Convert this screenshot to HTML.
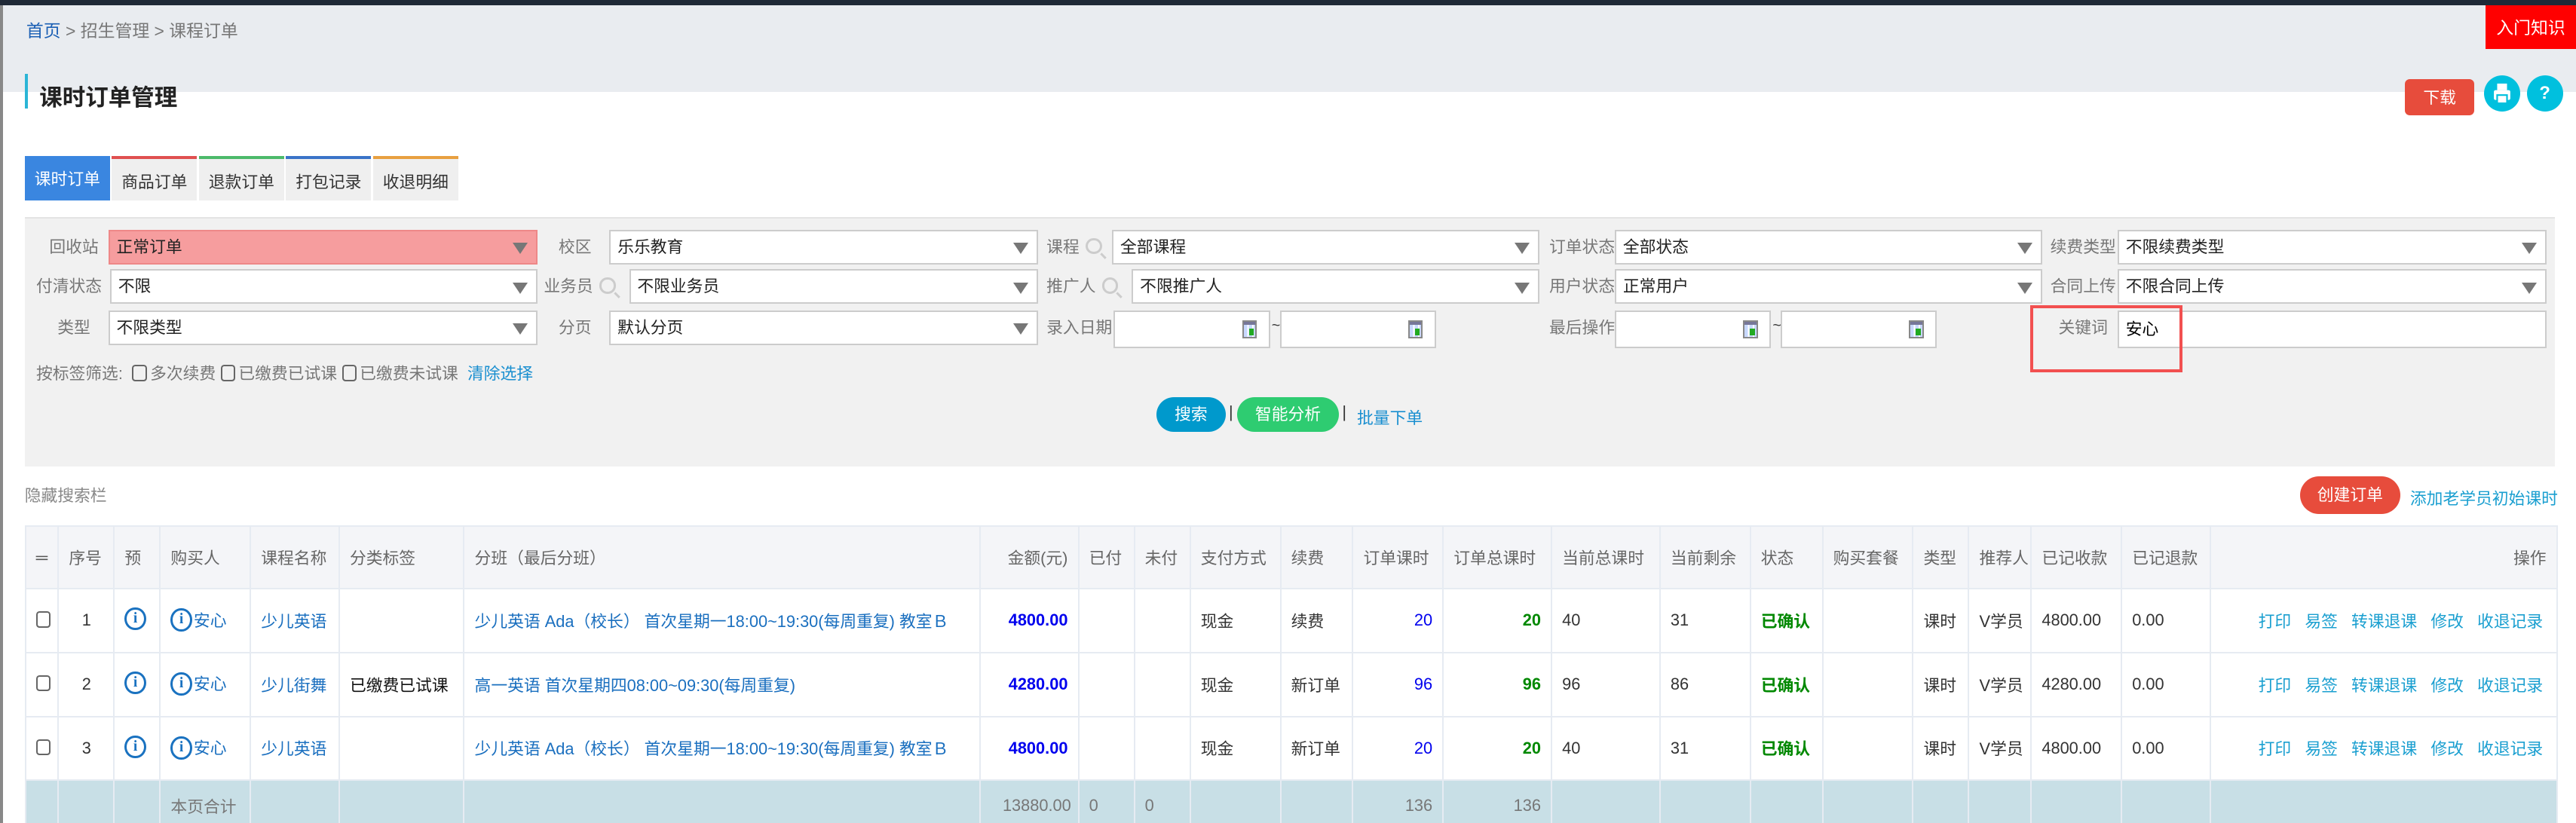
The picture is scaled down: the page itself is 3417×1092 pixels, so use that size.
<!DOCTYPE html>
<html><head><meta charset="utf-8">
<style>
html,body{margin:0;padding:0;width:3417px;height:1092px;overflow:hidden;background:#fff}
#w{zoom:2.1792;position:relative;width:1568px;height:502px;overflow:hidden;font-family:"Liberation Sans","Noto Sans CJK SC",sans-serif;font-size:10.5px;color:#333}
.a{position:absolute}
.top{left:0;top:0;width:1568px;height:3px;background:#1f2937}
.bc{left:2px;top:3px;width:1566px;height:53px;background:#e9ecf0}
.lb{left:0;top:3px;width:2px;height:499px;background:#888}
.sel{position:absolute;height:21px;background:#fff;border:1px solid #ccc;box-sizing:border-box;line-height:19px;padding-left:4px;font-size:10px;color:#222}
.sel:after{content:"";position:absolute;right:5px;top:7px;border-left:5px solid transparent;border-right:5px solid transparent;border-top:7px solid #777}
.inp{position:absolute;height:23px;background:#fff;border:1px solid #ccc;box-sizing:border-box}
.cal{position:absolute;right:7px;top:5px;width:9px;height:11px;background:repeating-linear-gradient(90deg,#c8d8ff 0 2px,#fff 2px 3px);border:1px solid #888;box-sizing:border-box}
.cal:after{content:"";position:absolute;right:1px;bottom:1px;width:3px;height:4px;background:#2a2}
.cal:before{content:"";position:absolute;left:0;top:0;right:0;height:2px;background:#779}
.lbl{position:absolute;color:#777;font-size:10px;line-height:21px}
.mg{display:inline-block;width:7px;height:7px;border:1.5px solid #ccc;border-radius:50%;position:relative;margin-left:4px;vertical-align:-1px}
.mg:after{content:"";position:absolute;right:-4px;bottom:-3px;width:4px;height:1.5px;background:#ccc;transform:rotate(45deg)}
.tab{position:absolute;top:95px;width:52px;height:27px;background:#efefef;text-align:center;line-height:28px;font-size:10px;color:#333;box-sizing:border-box}
table{position:absolute;left:15px;top:320px;border-collapse:collapse;table-layout:fixed;width:1541px}
td{border:1px solid #e6ebf2;padding:0 0 0 6px;white-space:nowrap;overflow:hidden;font-size:10px;height:38px;color:#333;vertical-align:middle}
thead td{background:#f4f5f8;color:#666;height:37px}
tr.tot td{background:#c8dfe6;color:#777;height:30px}
.bl{color:#1a6fbf}.amt{color:#0000ee;font-weight:bold;text-align:right;padding-right:6px}
.gr{color:#008800;font-weight:bold}.op{color:#1a9fd0}
.ic{display:inline-block;width:13px;height:14px;border:1.5px solid #1a72c0;border-radius:50%;box-sizing:border-box;text-align:center;font:bold 9px/11px "Liberation Serif",serif;color:#1a72c0;vertical-align:middle;margin-right:1px;position:relative;top:-1px}
.cb{display:inline-block;width:7px;height:8px;border:1px solid #666;border-radius:2px;vertical-align:-1px;margin:0 2px 0 3px}
</style></head><body><div id="w">
<div class="a top"></div><div class="a bc"></div><div class="a lb"></div>
<div class="a" style="left:16px;top:10px;font-size:10.5px;color:#777"><span style="color:#1a5fb4">首页</span> &gt; 招生管理 &gt; 课程订单</div>
<div class="a" style="left:1513px;top:3px;width:55px;height:27px;background:#f00;color:#fff;font-size:10.5px;text-align:center;line-height:28px">入门知识</div>
<div class="a" style="left:15px;top:45px;width:2px;height:21px;background:#2bb5d6"></div>
<div class="a" style="left:24px;top:48px;font-size:14px;font-weight:bold;color:#222">课时订单管理</div>
<div class="a" style="left:1464px;top:48px;width:42px;height:22px;background:#e74c3c;border-radius:3px;color:#fff;text-align:center;line-height:23px;font-size:10px">下载</div>
<div class="a" style="left:1512px;top:46px;width:22px;height:22px;border-radius:50%;background:#00c0de"><svg width="22" height="22" viewBox="0 0 22 22"><rect x="8" y="5" width="6" height="4" fill="#fff"/><rect x="6" y="9" width="10" height="6" rx="1" fill="#fff"/><rect x="8" y="12" width="6" height="5" fill="#fff" stroke="#00c0de" stroke-width="1"/></svg></div>
<div class="a" style="left:1538px;top:46px;width:22px;height:22px;border-radius:50%;background:#00c0de;color:#fff;text-align:center;line-height:22px;font-weight:bold;font-size:11px">?</div>

<div class="tab" style="left:15px;background:#3a86e0;color:#fff">课时订单</div>
<div class="tab" style="left:68px;border-top:2px solid #e05050">商品订单</div>
<div class="tab" style="left:121px;border-top:2px solid #4cba6a">退款订单</div>
<div class="tab" style="left:174px;border-top:2px solid #3a73c8">打包记录</div>
<div class="tab" style="left:227px;border-top:2px solid #e8a040">收退明细</div>

<div class="a" style="left:15px;top:132px;width:1540px;height:151px;background:#f1f1f1;border-top:1px solid #e4e4e4"></div>
<div class="lbl" style="left:30px;top:140px">回收站</div>
<div class="sel" style="left:66px;top:140px;width:261px;background:#f69d9e;border-color:#e88">正常订单</div>
<div class="lbl" style="left:340px;top:140px">校区</div>
<div class="sel" style="left:371px;top:140px;width:261px">乐乐教育</div>
<div class="lbl" style="left:637px;top:140px">课程<span class="mg"></span></div>
<div class="sel" style="left:677px;top:140px;width:260px">全部课程</div>
<div class="lbl" style="left:943px;top:140px">订单状态</div>
<div class="sel" style="left:983px;top:140px;width:260px">全部状态</div>
<div class="lbl" style="left:1248px;top:140px">续费类型</div>
<div class="sel" style="left:1289px;top:140px;width:261px">不限续费类型</div>
<div class="lbl" style="left:22px;top:164px">付清状态</div>
<div class="sel" style="left:67px;top:164px;width:260px">不限</div>
<div class="lbl" style="left:331px;top:164px">业务员<span class="mg"></span></div>
<div class="sel" style="left:383px;top:164px;width:249px">不限业务员</div>
<div class="lbl" style="left:637px;top:164px">推广人<span class="mg"></span></div>
<div class="sel" style="left:689px;top:164px;width:248px">不限推广人</div>
<div class="lbl" style="left:943px;top:164px">用户状态</div>
<div class="sel" style="left:983px;top:164px;width:260px">正常用户</div>
<div class="lbl" style="left:1248px;top:164px">合同上传</div>
<div class="sel" style="left:1289px;top:164px;width:261px">不限合同上传</div>
<div class="lbl" style="left:35px;top:189px">类型</div>
<div class="sel" style="left:66px;top:189px;width:261px">不限类型</div>
<div class="lbl" style="left:340px;top:189px">分页</div>
<div class="sel" style="left:371px;top:189px;width:261px">默认分页</div>
<div class="lbl" style="left:637px;top:189px">录入日期</div>
<div class="inp" style="left:678px;top:189px;width:95px"><span class="cal"></span></div>
<div class="a" style="left:774px;top:193px;font-size:9px">~</div>
<div class="inp" style="left:779px;top:189px;width:95px"><span class="cal"></span></div>
<div class="lbl" style="left:943px;top:189px">最后操作</div>
<div class="inp" style="left:983px;top:189px;width:95px"><span class="cal"></span></div>
<div class="a" style="left:1079px;top:193px;font-size:9px">~</div>
<div class="inp" style="left:1084px;top:189px;width:95px"><span class="cal"></span></div>
<div class="lbl" style="left:1253px;top:189px">关键词</div>
<div class="inp" style="left:1289px;top:189px;width:261px;font-size:10px;line-height:21px;padding-left:4px;color:#000">安心</div>
<div class="a" style="left:1236px;top:186px;width:89px;height:37px;border:2px solid #f25050"></div>
<div class="a" style="left:22px;top:220px;color:#777;font-size:10px">按标签筛选: <span class="cb"></span>多次续费<span class="cb"></span>已缴费已试课<span class="cb"></span>已缴费未试课 &nbsp;<span style="color:#1a8fd0">清除选择</span></div>
<div class="a" style="left:704px;top:242px;width:42px;height:21px;border-radius:11px;background:#0099cc;color:#fff;text-align:center;line-height:21px;font-size:10px">搜索</div>
<div class="a" style="left:748px;top:245px;color:#333;font-size:10px">|</div>
<div class="a" style="left:753px;top:242px;width:62px;height:21px;border-radius:11px;background:#2ecc71;color:#fff;text-align:center;line-height:21px;font-size:10px">智能分析</div>
<div class="a" style="left:817px;top:245px;color:#333;font-size:10px">|</div>
<div class="a" style="left:826px;top:247px;color:#1a8fd0;font-size:10px">批量下单</div>

<div class="a" style="left:15px;top:294px;color:#888;font-size:10px">隐藏搜索栏</div>
<div class="a" style="left:1400px;top:290px;width:61px;height:23px;border-radius:12px;background:#e74c3c;color:#fff;text-align:center;line-height:23px;font-size:10px">创建订单</div>
<div class="a" style="left:1467px;top:296px;color:#1a9fd0;font-size:10px">添加老学员初始课时</div>

<table>
<colgroup><col style="width:20px"><col style="width:34px"><col style="width:28px"><col style="width:55px"><col style="width:54px"><col style="width:76px"><col style="width:314px"><col style="width:60px"><col style="width:34px"><col style="width:34px"><col style="width:55px"><col style="width:44px"><col style="width:55px"><col style="width:66px"><col style="width:66px"><col style="width:55px"><col style="width:44px"><col style="width:55px"><col style="width:34px"><col style="width:38px"><col style="width:55px"><col style="width:54px"><col style="width:211px"></colgroup>
<thead><tr><td style="font-weight:bold;color:#555">═</td><td>序号</td><td>预</td><td>购买人</td><td>课程名称</td><td>分类标签</td><td>分班（最后分班）</td><td style="text-align:right;padding-right:6px">金额(元)</td><td>已付</td><td>未付</td><td>支付方式</td><td>续费</td><td>订单课时</td><td>订单总课时</td><td>当前总课时</td><td>当前剩余</td><td>状态</td><td>购买套餐</td><td>类型</td><td>推荐人</td><td>已记收款</td><td>已记退款</td><td style="text-align:right;padding-right:6px">操作</td></tr></thead>
<tbody>
<tr><td><span class="cb" style="margin:0"></span></td><td style="padding-left:14px">1</td><td><span class="ic">i</span></td><td class="bl"><span class="ic">i</span>安心</td><td class="bl">少儿英语</td><td></td><td class="bl">少儿英语 Ada（校长） 首次星期一18:00~19:30(每周重复) 教室Ｂ</td><td class="amt">4800.00</td><td></td><td></td><td>现金</td><td>续费</td><td style="text-align:right;padding-right:6px;color:#00e">20</td><td class="gr" style="text-align:right;padding-right:6px">20</td><td>40</td><td>31</td><td class="gr">已确认</td><td></td><td>课时</td><td>V学员</td><td>4800.00</td><td>0.00</td><td class="op" style="text-align:right;padding-right:8px">打印&nbsp;&nbsp;&nbsp;易签&nbsp;&nbsp;&nbsp;转课退课&nbsp;&nbsp;&nbsp;修改&nbsp;&nbsp;&nbsp;收退记录</td></tr>
<tr><td><span class="cb" style="margin:0"></span></td><td style="padding-left:14px">2</td><td><span class="ic">i</span></td><td class="bl"><span class="ic">i</span>安心</td><td class="bl">少儿街舞</td><td style="color:#111">已缴费已试课</td><td class="bl">高一英语 首次星期四08:00~09:30(每周重复)</td><td class="amt">4280.00</td><td></td><td></td><td>现金</td><td>新订单</td><td style="text-align:right;padding-right:6px;color:#00e">96</td><td class="gr" style="text-align:right;padding-right:6px">96</td><td>96</td><td>86</td><td class="gr">已确认</td><td></td><td>课时</td><td>V学员</td><td>4280.00</td><td>0.00</td><td class="op" style="text-align:right;padding-right:8px">打印&nbsp;&nbsp;&nbsp;易签&nbsp;&nbsp;&nbsp;转课退课&nbsp;&nbsp;&nbsp;修改&nbsp;&nbsp;&nbsp;收退记录</td></tr>
<tr><td><span class="cb" style="margin:0"></span></td><td style="padding-left:14px">3</td><td><span class="ic">i</span></td><td class="bl"><span class="ic">i</span>安心</td><td class="bl">少儿英语</td><td></td><td class="bl">少儿英语 Ada（校长） 首次星期一18:00~19:30(每周重复) 教室Ｂ</td><td class="amt">4800.00</td><td></td><td></td><td>现金</td><td>新订单</td><td style="text-align:right;padding-right:6px;color:#00e">20</td><td class="gr" style="text-align:right;padding-right:6px">20</td><td>40</td><td>31</td><td class="gr">已确认</td><td></td><td>课时</td><td>V学员</td><td>4800.00</td><td>0.00</td><td class="op" style="text-align:right;padding-right:8px">打印&nbsp;&nbsp;&nbsp;易签&nbsp;&nbsp;&nbsp;转课退课&nbsp;&nbsp;&nbsp;修改&nbsp;&nbsp;&nbsp;收退记录</td></tr>
<tr class="tot"><td></td><td></td><td></td><td>本页合计</td><td></td><td></td><td></td><td style="text-align:right;padding-right:4px">13880.00</td><td>0</td><td>0</td><td></td><td></td><td style="text-align:right;padding-right:6px">136</td><td style="text-align:right;padding-right:6px">136</td><td></td><td></td><td></td><td></td><td></td><td></td><td></td><td></td><td></td></tr>
</tbody></table>
</div></body></html>
